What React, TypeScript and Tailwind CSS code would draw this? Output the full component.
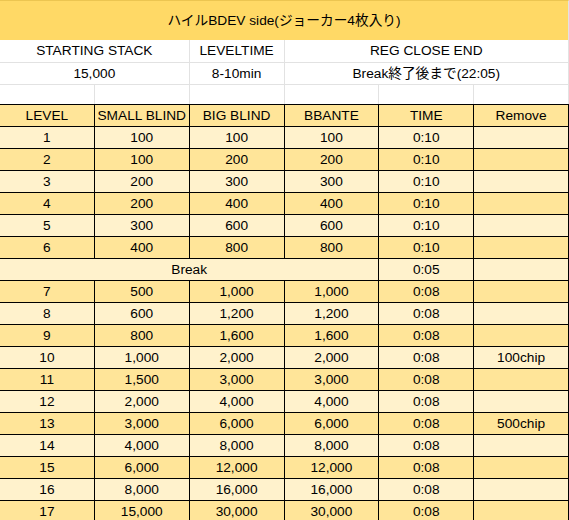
const rows = [
  { level: "1", sb: "100", bb: "100", ante: "100", time: "0:10", remove: "" },
  { level: "2", sb: "100", bb: "200", ante: "200", time: "0:10", remove: "" },
  { level: "3", sb: "200", bb: "300", ante: "300", time: "0:10", remove: "" },
  { level: "4", sb: "200", bb: "400", ante: "400", time: "0:10", remove: "" },
  { level: "5", sb: "300", bb: "600", ante: "600", time: "0:10", remove: "" },
  { level: "6", sb: "400", bb: "800", ante: "800", time: "0:10", remove: "" },
  { level: "break", sb: "", bb: "", ante: "", time: "0:05", remove: "" },
  { level: "7", sb: "500", bb: "1,000", ante: "1,000", time: "0:08", remove: "" },
  { level: "8", sb: "600", bb: "1,200", ante: "1,200", time: "0:08", remove: "" },
  { level: "9", sb: "800", bb: "1,600", ante: "1,600", time: "0:08", remove: "" },
  { level: "10", sb: "1,000", bb: "2,000", ante: "2,000", time: "0:08", remove: "100chip" },
  { level: "11", sb: "1,500", bb: "3,000", ante: "3,000", time: "0:08", remove: "" },
  { level: "12", sb: "2,000", bb: "4,000", ante: "4,000", time: "0:08", remove: "" },
  { level: "13", sb: "3,000", bb: "6,000", ante: "6,000", time: "0:08", remove: "500chip" },
  { level: "14", sb: "4,000", bb: "8,000", ante: "8,000", time: "0:08", remove: "" },
  { level: "15", sb: "6,000", bb: "12,000", ante: "12,000", time: "0:08", remove: "" },
  { level: "16", sb: "8,000", bb: "16,000", ante: "16,000", time: "0:08", remove: "" },
  { level: "17", sb: "15,000", bb: "30,000", ante: "30,000", time: "0:08", remove: "" },
];

const cell = "flex items-center justify-center border-r border-black";
const gray = "flex items-center justify-center border-r border-[#e2e2e2]";

export default function App() {
  return (
    <div
      className="w-[569px] h-[520px] overflow-hidden bg-white text-[13.7px] text-black leading-none"
      style={{ fontFamily: '"Liberation Sans", Arial, "Noto Sans CJK JP", sans-serif' }}
    >
      {/* title */}
      <div className="h-[40px] flex items-center justify-center bg-[#ffd966] border-t border-[#ecc551] border-r border-r-[#e2e2e2]">
        ハイルBDEV side(ジョーカー4枚入り)
      </div>

      {/* info */}
      <div className="grid grid-cols-6 h-[23px] border-b border-[#e2e2e2]">
        <div className={`${gray} col-span-2`}>STARTING STACK</div>
        <div className={gray}>LEVELTIME</div>
        <div className={`${gray} col-span-3`}>REG CLOSE END</div>
      </div>
      <div className="grid grid-cols-6 h-[22px] border-b border-[#e2e2e2]">
        <div className={`${gray} col-span-2`}>15,000</div>
        <div className={gray}>8-10min</div>
        <div className={`${gray} col-span-3`}>Break終了後まで(22:05)</div>
      </div>
      <div className="grid grid-cols-6 h-[19px]">
        {[0, 1, 2, 3, 4, 5].map((i) => (
          <div key={i} className={gray} />
        ))}
      </div>

      {/* blind table */}
      <div className="grid grid-cols-6 h-[23px] border-y border-black bg-[#ffe599]">
        <div className={cell}>LEVEL</div>
        <div className={cell}>SMALL BLIND</div>
        <div className={cell}>BIG BLIND</div>
        <div className={cell}>BBANTE</div>
        <div className={cell}>TIME</div>
        <div className={cell}>Remove</div>
      </div>
      {rows.map((r, i) => (
        <div
          key={i}
          className={`grid grid-cols-6 h-[22px] border-b border-black ${i % 2 === 0 ? "bg-[#fff2cc]" : "bg-[#ffe599]"}`}
        >
          {r.level === "break" ? (
            <div className={`${cell} col-span-4`}>Break</div>
          ) : (
            <>
              <div className={cell}>{r.level}</div>
              <div className={cell}>{r.sb}</div>
              <div className={cell}>{r.bb}</div>
              <div className={cell}>{r.ante}</div>
            </>
          )}
          <div className={cell}>{r.time}</div>
          <div className={cell}>{r.remove}</div>
        </div>
      ))}
    </div>
  );
}
